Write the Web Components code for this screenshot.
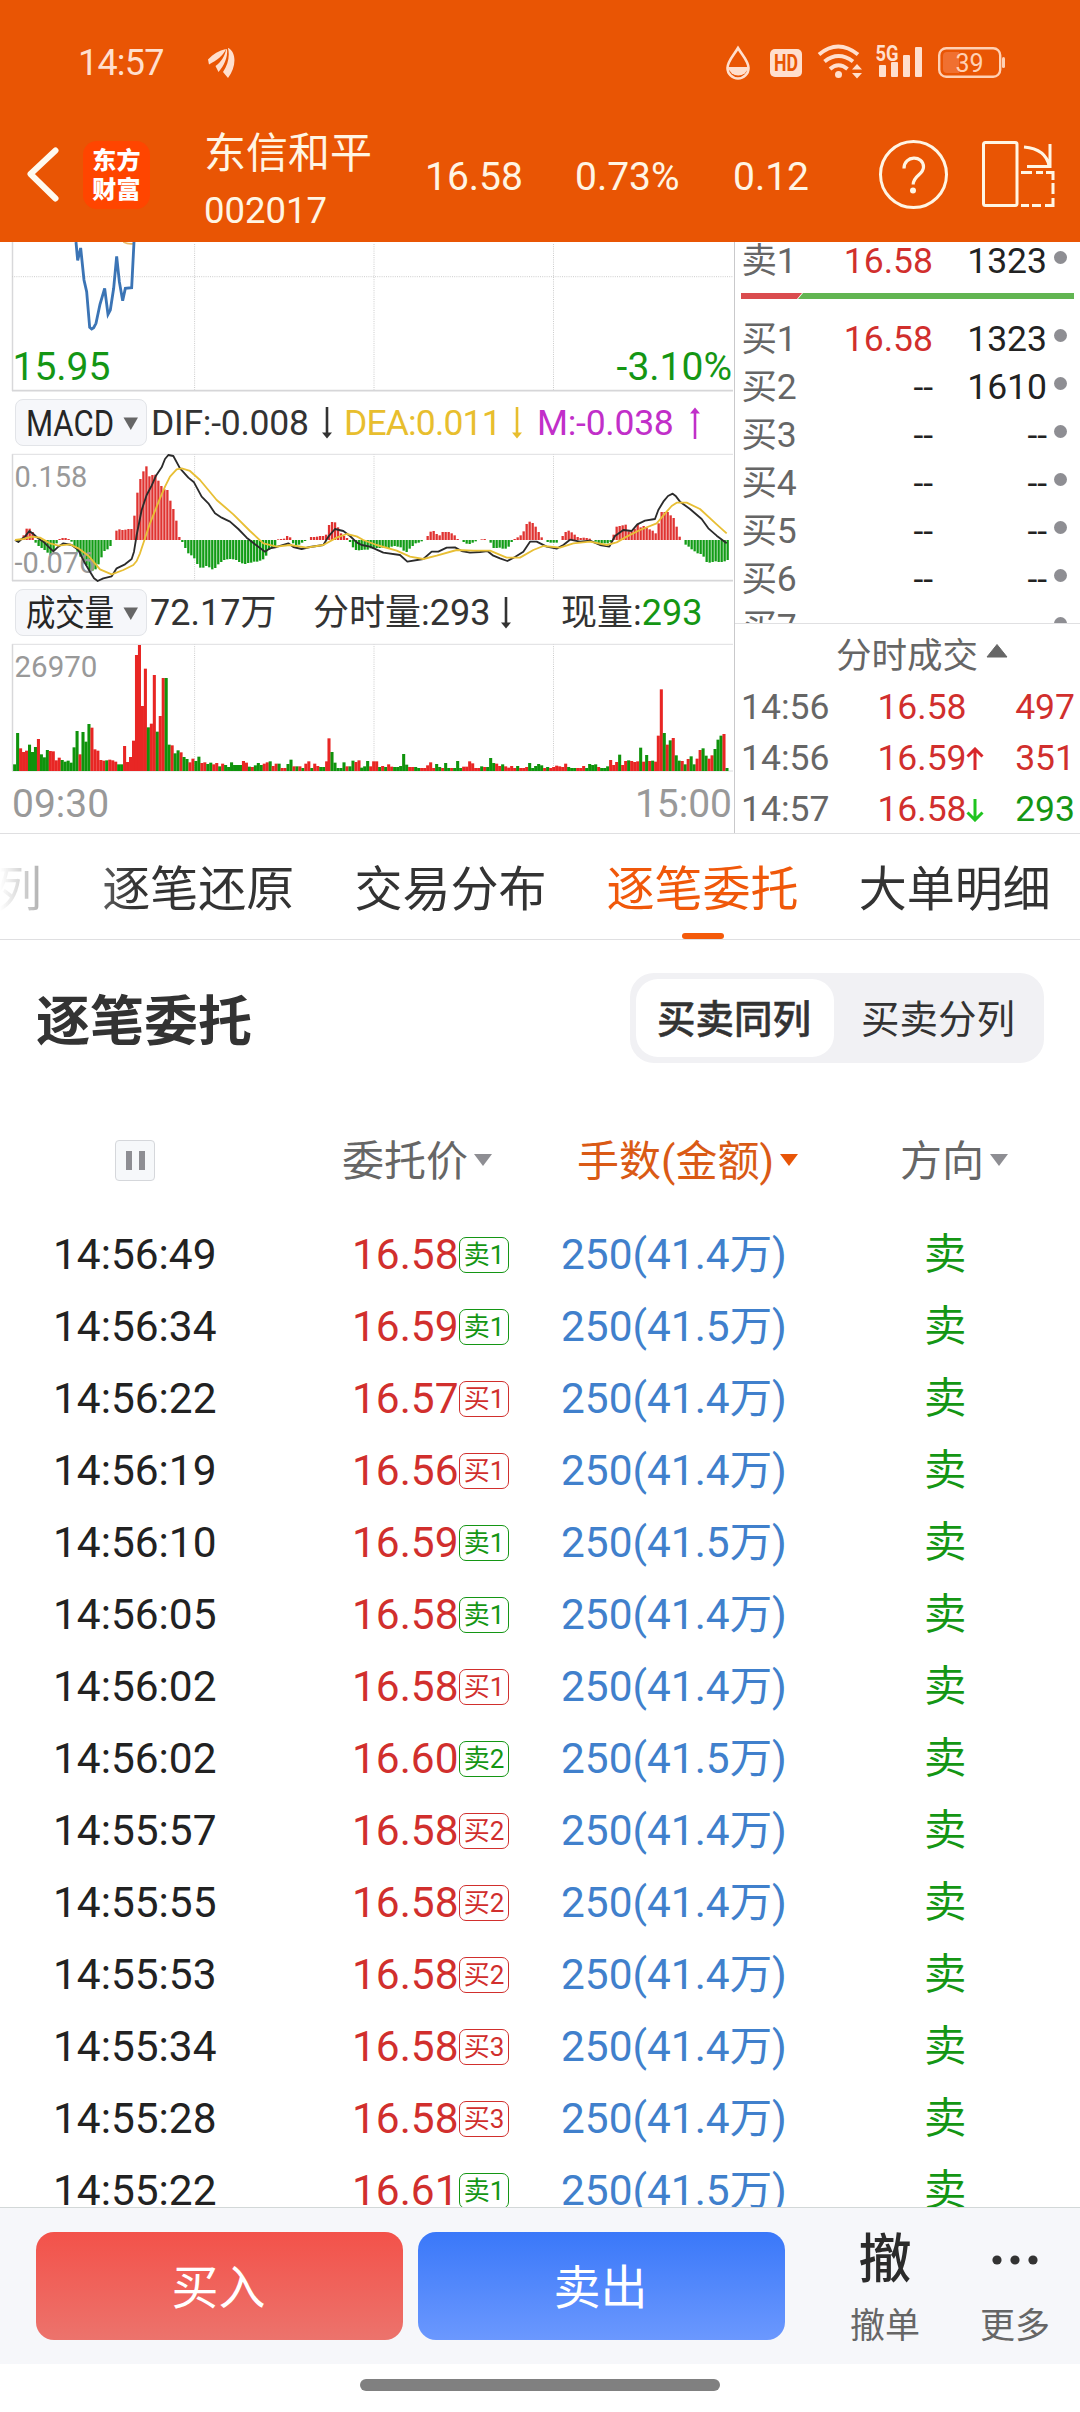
<!DOCTYPE html>
<html lang="zh-CN">
<head>
<meta charset="utf-8">
<title>东信和平 002017</title>
<style>
html,body{margin:0;padding:0;background:#fff}
body{width:1080px;height:2412px;overflow:hidden;font-family:Roboto,"Noto Sans CJK SC",sans-serif;color:#333}
</style>
</head>
<body>
<stock-app></stock-app>
<script>
const define = (name, css, html) => customElements.define(name, class extends HTMLElement {
  constructor() {
    super();
    const root = this.attachShadow({ mode: 'open' });
    root.innerHTML = `<style>*{box-sizing:border-box}:host{display:block;box-sizing:border-box;white-space:nowrap}svg{display:block;flex:none}${css}</style>` +
      (typeof html === 'function' ? html(this) : html);
  }
});

/* ---------- status bar ---------- */
define('status-bar', `
:host{height:106px;display:flex;align-items:center;padding:18px 74px 0 78px;color:#ffdfce;font-size:36px;line-height:44px}
.time{letter-spacing:-.8px;width:130px;padding-top:2px}
.sp{flex:1}
.icons{display:flex}`,
`<span class="time">14:57</span>
<svg width="28" height="30" viewBox="0 0 28 30" style="margin-top:2px"><g fill="#ffdfce"><path d="M0 11.500C5 6 11 2.500 18 1 15 8 9 12 1 16.500Z"/><path d="M19 1C20 9 16 18 10.500 24L7.500 18C13 14 17 8 18 1.500Z"/><path d="M20.500 0C29 5 28 20 20 30L15 24C20 17 22 8 20 0Z"/></g></svg>
<span class="sp"></span>
<svg width="280" height="36" viewBox="727 44 280 36" style="margin-top:0">
<path d="M739 48C735 55 728.500 61 728.500 68A10.500 10.500 0 0 0 749.500 68C749.500 61 743 55 739 48Z" fill="none" stroke="#ffdfce" stroke-width="2.600"/>
<path d="M729 67H749.500A10.500 11 0 0 1 729 67Z" fill="#ffdfce"/>
<rect x="771" y="49" width="32" height="28" rx="5" fill="#ffdfce"/>
<text x="787" y="71" font-size="23" font-weight="700" text-anchor="middle" textLength="24" lengthAdjust="spacingAndGlyphs" fill="#e85503" font-family="Roboto">HD</text>
<g fill="none" stroke="#ffdfce" stroke-width="4"><path d="M820 54.500Q839 38.500 859 54.500"/><path d="M825.500 61.500Q839.500 50.500 854 61.500"/><path d="M831 69Q839.500 61.500 848.500 69"/></g>
<circle cx="839.500" cy="74.500" r="3.500" fill="#ffdfce"/>
<path d="M853 69.500L858 64L863 69.500ZM853 73L858 78.500L863 73Z" fill="#ffdfce"/>
<text x="876.500" y="60.500" font-size="22" font-weight="700" textLength="23" lengthAdjust="spacingAndGlyphs" fill="#ffdfce" font-family="Roboto">5G</text>
<g fill="#ffdfce"><rect x="880" y="65" width="7" height="12" rx="1"/><rect x="892" y="62" width="7" height="15" rx="1"/><rect x="904" y="55" width="7" height="22" rx="1"/><rect x="916" y="47" width="7" height="30" rx="1"/></g>
<rect x="940.200" y="48.200" width="61" height="28.600" rx="7" fill="none" stroke="#ffd0b4" stroke-width="2.400"/>
<path d="M948 52H960V73H948Q944 73 944 69V56Q944 52 948 52Z" fill="#f07030"/>
<rect x="1003" y="57" width="3" height="11" rx="1.500" fill="#ffd0b4"/>
<text x="970.500" y="71.500" font-size="25" text-anchor="middle" fill="#ffd0b4" font-family="Roboto">39</text>
</svg>`);

/* ---------- title bar ---------- */
define('app-logo', `
:host{width:67px;height:68px;border-radius:14px;background:#ff4500;color:#fff;display:flex;flex-direction:column;align-items:center;justify-content:center;
font:900 24px/29px "Noto Sans CJK SC",sans-serif;letter-spacing:.2px;padding-bottom:4px}`,
`<span>东方</span><span>财富</span>`);

define('title-bar', `
:host{height:136px;display:flex;align-items:flex-start;color:#fff5e4;padding-left:26px}
app-logo{margin:35px 0 0 23px}
.name{margin:24px 0 0 54px;width:221px}
.name b{display:block;font-weight:400;font-size:42px;line-height:48px}
.name i{display:block;font-style:normal;font-size:36.500px;line-height:40px;margin-top:13px}
.q{font-size:39px;line-height:48px;margin-top:47px}
.a{width:150px}.b{width:158px}.c{width:145px}`,
`<svg width="34" height="56" viewBox="26 146 34 56" style="margin-top:40px"><path d="M55.500 150.500L30.500 174L55.500 198.500" fill="none" stroke="#fffaf0" stroke-width="6" stroke-linecap="round" stroke-linejoin="round"/></svg>
<app-logo></app-logo>
<div class="name"><b>东信和平</b><i>002017</i></div>
<span class="q a">16.58</span><span class="q b">0.73%</span><span class="q c">0.12</span>
<svg width="180" height="72" viewBox="878 138 180 72" style="margin-top:32px">
<circle cx="913.500" cy="174.500" r="33" fill="none" stroke="#fff5e4" stroke-width="3"/>
<path d="M904 168.500C904 155 923.500 155 923.500 167C923.500 175 913.200 175 913.200 184.500" fill="none" stroke="#fff5e4" stroke-width="3.200"/><circle cx="913" cy="190.500" r="3" fill="#fff5e4"/>
<g fill="none" stroke="#fff5e4" stroke-width="3"><rect x="983.500" y="142.500" width="33.500" height="63" rx="2"/>
<path d="M1021 172.500H1032M1036 172.500H1043M1046 172.500H1053V180M1053 183V194M1053 198V205.500H1045M1041 205.500H1032M1029 205.500H1021"/>
<path d="M1024 147Q1046 149 1049 166M1050 144V166.500H1027"/></g></svg>`);

/* ---------- charts (drawn in thirds of a pixel) ---------- */
const RED = '#d12f2d', GREEN = '#149614';
const curve = p => 'M' + p.trim().split(/\s+/).join('L');
const grid = (y1, y2) => [194.6, 374, 553.5].map(x => `<path d="M${x} ${y1}V${y2}" stroke="#ccc" stroke-width="1" stroke-dasharray="1 1.200"/>`).join('');

define('price-chart', `:host{height:157px}text{font-family:Roboto;font-size:39px;fill:${GREEN}}`,
`<svg width="734" height="157" viewBox="0 242 734 157">
<path d="M12.500 242V391" stroke="#d8d8da" stroke-width="1.500"/>${grid(244, 390)}
<path d="M12 276.700H733" stroke="#ccc" stroke-dasharray="1 1.200"/><path d="M12 390.700H733" stroke="#d6d6d8" stroke-width="1.800"/>
<g transform="translate(0 235) scale(.33333)" fill="none">
<path d="M370 21Q385 29 402 26" stroke="#e8b968" stroke-width="5"/>
<path d="${curve('228,21 233,76 242,39 252,135 260,170 269,277 275,282 281,278 288,265 300,208 314,160 324,238 331,225 341,160 350,64 358,140 368,197 376,160 395,158 402,21')}" stroke="#3b74b5" stroke-width="8.500"/></g>
<text x="12.500" y="380.300">15.95</text><text x="732" y="380.300" text-anchor="end">-3.10%</text></svg>`);

const macd = [
  [53, '-5 2 14 34 34 24 -8 -18 -24 -30 -38 -46 -33 -10 3 6 6 3 -5 -18 -35 -50 -64 -76 -90 -92 -88 -73 -52 -33 -28 -18 0 28 32 30 31 33 33 73 142 183 206 221 191 195 196 178 162 152 150 118 93 58 9 -6 -24 -40 -46 -55 -72 -83 -83 -78 -82 -88 -84 -73 -66 -60 -58 -57 -58 -60 -66 -70 -72 -69 -68 -65 -65 -62 -58 -47 -30 -24 -18 2 3 4 12 8 -10 -16 -14 -8 -3 0 9 9 10 12 12 16 45 54 53 38 20 12 6 -6 -22 -30 -31'],
  [1085, '-30 -29 -29 -25 -27 -24 -24 -23 -23 -24 -20 -18 -20 -22 -32 -36 -26 -18 -10 -8 -4 0 12 25 27 18 14 24 24 24 20 14 3 0 -6 -11 -12 -8 -4 0 2 3 0 -8 -24 -24 -23 -26 -26 -20 -6 3 8 14 26 48 55 51 40 24 8 0 -6 -8 -8 -8 0 12 24 28 23 16 9 6 7 6 4 0 -5 -9 -10 -10 -10 -6 16 40 42 44 46 26 26 34 46 38 42 36 32 28 20 50 84 84 84 74 66 40 10 0 -14 -20 -28 -34 -40 -42 -50 -66 -68 -66 -64 -66 -66 -64 -60']
];
const macdBars = macd.map(([x0, s]) => s.split(' ').map((v, i, all) => {
  const x = x0 + i * ((x0 === 53 ? 1077 : 2183) - x0) / (all.length - 1);
  return +v ? `<path d="M${x} 915V${915 - v}" stroke="${v > 0 ? '#e03331' : '#129c16'}"/>` : '';
}).join('')).join('');

define('macd-chart', `:host{height:134px}text{font-family:Roboto;font-size:29px;fill:#999}`,
`<svg width="734" height="134" viewBox="0 451 734 134">
<path d="M12.500 454V581" stroke="#d8d8da" stroke-width="1.500"/>${grid(454, 580)}
<path d="M12 454.300H733" stroke="#dedee0"/><path d="M12 580.700H733" stroke="#d6d6d8" stroke-width="1.800"/>
<g transform="translate(0 235) scale(.33333)" fill="none" stroke-linejoin="round"><g stroke-width="7">${macdBars}</g></g>
<text x="14.500" y="486.800">0.158</text><text x="14.500" y="573">-0.076</text>
<g transform="translate(0 235) scale(.33333)" fill="none" stroke-linejoin="round">
<path stroke="#2b2b2b" stroke-width="5.500" d="${curve('45,915 55,921 65,912 75,905 88,888 100,897 112,908 130,920 145,935 160,949 175,935 190,925 215,930 235,945 255,985 270,1010 282,1030 293,1038 310,1030 335,1024 350,1000 375,988 395,972 402,950 410,900 425,825 440,780 455,752 468,722 485,697 495,672 505,660 520,663 540,700 565,728 582,742 605,785 625,805 645,835 665,848 690,860 715,882 740,908 765,928 795,950 810,940 830,936 865,925 880,936 905,942 930,936 970,930 985,905 1005,882 1030,888 1050,903 1070,922 1085,930 1110,935 1150,953 1200,960 1222,980 1270,972 1295,950 1315,950 1340,938 1365,937 1385,948 1410,953 1440,951 1462,948 1480,962 1500,970 1522,978 1545,966 1570,950 1590,920 1610,920 1640,935 1670,941 1690,930 1710,914 1740,920 1770,917 1800,930 1828,935 1845,903 1870,885 1895,888 1912,868 1935,857 1965,852 1975,825 1990,800 2004,783 2018,776 2028,784 2040,800 2070,822 2105,852 2125,880 2150,902 2180,925')}"/>
<path stroke="#e8bf35" stroke-width="5.500" d="${curve('45,915 70,912 95,905 120,908 150,925 175,932 210,928 235,940 265,962 300,1003 335,1018 370,1005 400,990 410,978 420,955 450,865 480,790 495,755 510,725 530,703 545,700 570,708 600,735 650,795 700,838 750,888 790,925 830,935 870,930 920,938 970,930 1010,908 1040,897 1070,904 1090,915 1130,930 1190,947 1230,965 1270,972 1310,962 1370,945 1420,947 1470,947 1520,968 1560,968 1600,945 1630,933 1680,938 1720,925 1770,920 1820,930 1850,922 1880,905 1920,885 1970,865 2000,830 2015,813 2030,803 2060,803 2100,822 2150,868 2180,895')}"/></g></svg>`);

const volume = [
  [44, 980, 'g20 g114 r68 r57 r61 g79 g57 g72 r96 g50 g41 g63 r60 r59 r32 r40 g33 g28 g31 g25 g71 g120 r50 g117 g88 g141 r130 r65 r61 r33 r31 g32 r34 r32 r28 g20 g20 r75 r27 r42 r91 r348 r378 r195 r307 g131 r142 r288 g118 r165 r279 g279 g79 r77 g53 g62 r56 g42 g36 r26 r37 g30 g43 r24 r26 g21 g25 r20 r24 g14 r22 g18 g12 g26 g18 g18 g18 r30 r25 g13 r12 g17 g24 g18 r22 r26 g29 r15 r22 g22 r9 r9 g21 g34 r14 g14 r14 g9 r22 r29 g9 r22 r15 g12 g12 r29'],
  [987, 1077, 'r98 g57 g25 g9 g9 g26 r14 g14 g31 r27 r32'],
  [1085, 1967, 'g10 g14 g30 r14 r29 r29 g12 r15 g12 r20 r13 g12 g12 g15 g51 g19 r12 r12 g12 g9 r9 r9 r17 r26 r9 g21 g12 r9 g24 g9 r9 g9 g30 g9 r13 r13 r29 r23 r9 r9 g14 r12 g12 g39 g24 r22 r15 g20 r14 r10 r15 r9 g15 r9 r9 r12 g24 g9 g15 g21 g17 r9 g12 r9 r12 r16 r14 r12 r22 g12 g9 g9 r9 r9 r15 g9 g21 g18 g20 r12 g9 g9 g14 r33 r18 r27 g49 r18 r30 g32 r30 r27 r29 g70 r28 g48 r30 g31 r28'],
  [1975, 2181, 'r106 r245 g114 r79 g92 r99 g47 g31 r30 g20 r36 g44 g20 r37 r63 g68 g46 r37 r47 g66 g94 g106 r111 g9']
];
const volBars = volume.map(([a, b, s]) => s.split(' ').map((t, i, all) => {
  const x = a + i * (b - a) / (all.length - 1), h = +t.slice(1);
  return `<rect x="${(x - 4.6).toFixed(1)}" y="${573 - h}" width="9.200" height="${h}" fill="${t[0] === 'r' ? '#e82624' : '#0f930c'}"/>`;
}).join('')).join('');

define('volume-chart', `:host{height:192px}text{font-family:Roboto;fill:#999;font-size:39px}`,
`<svg width="734" height="192" viewBox="0 641 734 192">
<path d="M12.500 644V771" stroke="#d8d8da" stroke-width="1.500"/>${grid(644, 770)}
<path d="M12 644.300H733M12 771H733" stroke="#dedee0"/>
<g transform="translate(0 580) scale(.33333)">${volBars}</g>
<text x="14.500" y="677" style="font-size:29.500px">26970</text>
<text x="12" y="817.300">09:30</text><text x="732" y="817.300" text-anchor="end">15:00</text></svg>`);

define('index-chip', `
:host{width:132px;height:47px;border:1.500px solid #e2e4e8;border-radius:8px;background:#f6f7fa;display:flex;align-items:center;color:#262626;padding-left:10px}
text{font-size:36px;font-family:Roboto,"Noto Sans CJK SC",sans-serif;fill:#262626}`,
el => `<svg width="118" height="44" viewBox="0 0 118 44"><text x="0" y="34.500" textLength="88" lengthAdjust="spacingAndGlyphs">${el.getAttribute('label')}</text><path d="M97.500 16.500H112L104.800 29Z" fill="#666"/></svg>`);

define('thin-arrow', `:host{width:10px;height:32px;flex:none}:host([up]){transform:scaleY(-1)}`,
`<svg width="10" height="32" viewBox="0 0 10 32"><path d="M5 0V27" stroke="currentColor" stroke-width="2.600"/><path d="M0 25.500L5 31.500L10 25.500Z" fill="currentColor"/></svg>`);

define('index-row', `
:host{display:flex;align-items:center;padding-left:15px;font-size:35.500px;line-height:47px;color:#333}`,
`<slot></slot>`);

define('chart-column', `
:host{width:734px;display:flex;flex-direction:column;flex:none}
index-row{flex:none}
.m1{height:52px;padding-bottom:5px}
.m2{height:56px;padding-bottom:1px}
.t{letter-spacing:-.25px;font-size:35.500px;padding-top:1px}
.m2 .t{font-size:36px;letter-spacing:0}
.y{color:#e8be2e}.p{color:#c12fc9}.g{color:${GREEN}}`,
`<price-chart></price-chart>
<index-row class="m1"><index-chip label="MACD"></index-chip>
<span class="t" style="width:171px;margin-left:4px">DIF:-0.008</span><thin-arrow></thin-arrow>
<span class="t y" style="width:158px;margin-left:12px;letter-spacing:-.85px">DEA:0.011</span><thin-arrow class="y" style="margin-left:10px"></thin-arrow>
<span class="t p" style="width:148px;margin-left:15px">M:-0.038</span><thin-arrow up class="p" style="margin-left:5px"></thin-arrow></index-row>
<macd-chart></macd-chart>
<index-row class="m2"><index-chip label="成交量"></index-chip>
<span class="t" style="width:163px;margin-left:3px">72.17万</span>
<span class="t" style="width:188px">分时量:293</span><thin-arrow></thin-arrow>
<span class="t" style="margin-left:50px">现量:</span><span class="t g">293</span></index-row>
<volume-chart></volume-chart>`);

/* ---------- order book ---------- */
define('book-row', `
:host{display:flex;align-items:center;height:48px;font-size:35.500px;line-height:48px;color:#222;flex:none;padding-left:6.500px}
.l{width:60px;color:#666;letter-spacing:-.3px}.p{width:131.500px;text-align:right}.v{width:114px;text-align:right}
.l,.p,.v{padding-top:1px}
.p[r]{color:${RED}}.d{width:13px;height:13px;border-radius:50%;background:#8e8e93;margin:-6px 0 0 7px}`,
el => { const [l, p, v] = el.dataset.v.split('|'); return `<span class="l">${l}</span><span class="p" ${p === '--' ? '' : 'r'}>${p}</span><span class="v">${v}</span><span class="d"></span>`; });

define('deal-row', `
:host{display:flex;align-items:center;height:51px;flex:none;font-size:35.500px;line-height:51px;color:#666;padding-left:6px}
.p{color:${RED};margin-left:46px;width:91px;padding-left:2px}.a{width:18px;margin-left:0}
.v{margin-left:auto;padding-right:5px;color:${RED}}.v[g]{color:${GREEN}}`,
el => {
  const [t, p, a, v] = el.dataset.v.split('|');
  const arrow = a === 'u' ? `<svg width="18" height="24" viewBox="0 0 18 24"><path d="M9 23V2M1.500 9.500L9 2L16.500 9.500" fill="none" stroke="#d8262a" stroke-width="3"/></svg>`
    : a === 'd' ? `<svg width="18" height="24" viewBox="0 0 18 24"><path d="M9 1V22M1.500 14.500L9 22L16.500 14.500" fill="none" stroke="#1fc41f" stroke-width="3"/></svg>` : '';
  return `<span>${t}</span><span class="p">${p}</span><span class="a">${arrow}</span><span class="v" ${a === 'd' ? 'g' : ''}>${v}</span>`;
});

define('order-book', `
:host{flex:1;border-left:1px solid #c9c9cb;height:591px;display:flex;flex-direction:column;overflow:hidden}
.book{height:381px;flex:none;overflow:hidden;display:flex;flex-direction:column}
.book>:first-child{margin-top:-6px}
.ratio{height:30px;padding:9px 0 0 6px;flex:none}
.head{height:59px;flex:none;border-top:1px solid #e0e0e2;display:flex;align-items:flex-start;justify-content:center;gap:8px;font-size:35.500px;color:#666;padding:1px 0 0 3px;line-height:62px}
.head svg{margin-top:19px}`,
`<div class="book"><book-row data-v="卖1|16.58|1323"></book-row>
<div class="ratio"><svg width="333" height="6" viewBox="0 0 333 6"><path d="M0 0H61L56 6H0Z" fill="#da4c4e"/><path d="M62 0H333V6H57Z" fill="#62b552"/></svg></div>
${['买1|16.58|1323', '买2|--|1610', '买3|--|--', '买4|--|--', '买5|--|--', '买6|--|--', '买7|--|--'].map(v => `<book-row data-v="${v}"></book-row>`).join('')}</div>
<div class="head"><span style="margin-left:26px">分时成交</span><svg width="22" height="14" viewBox="0 0 22 14"><path d="M11 .5L21 13H1Z" fill="#666" stroke="#666" stroke-linejoin="round"/></svg></div>
<deal-row data-v="14:56|16.58||497"></deal-row><deal-row data-v="14:56|16.59|u|351"></deal-row><deal-row data-v="14:57|16.58|d|293"></deal-row>`);

/* ---------- tabs ---------- */
define('tab-strip', `
:host{height:107px;border-top:1px solid #dfdfe1;border-bottom:1px solid #dfdfe1;overflow:hidden}
.r{display:flex;gap:60.200px;margin-left:-6px;font-size:48px;line-height:112px;color:#333;height:105px}
.w{-webkit-mask-image:linear-gradient(90deg,transparent 0,rgba(0,0,0,.4) 42px,#000 135px)}
.on{color:#f0580a;display:flex;flex-direction:column;align-items:center}
.on u{display:block;width:42px;height:6px;border-radius:3px;background:#f45a0a;margin-top:-13px}`,
`<div class="w"><div class="r"><span>列</span><span>逐笔还原</span><span>交易分布</span><span class="on">逐笔委托<u></u></span><span>大单明细</span></div></div>`);

define('seg-control', `
:host{display:flex;width:414px;height:90px;border-radius:24px;background:#f1f1f4;padding:6px;font-size:38.500px;line-height:82px;color:#333}
b{width:198px;height:78px;border-radius:22px;background:#fff;text-align:center;font-weight:500;-webkit-text-stroke:.5px #333;padding-right:2px}
span{flex:1;text-align:center;padding-left:4px}`,
`<b>买卖同列</b><span>买卖分列</span>`);

define('section-head', `
:host{height:156px;display:flex;justify-content:space-between;align-items:flex-start;padding:33px 36px 0 36px}
h2{margin:0;font-size:54px;font-weight:700;line-height:100px;color:#333}`,
`<h2>逐笔委托</h2><seg-control></seg-control>`);

/* ---------- order list ---------- */
define('list-head', `
:host{height:123px;display:flex;align-items:center;font-size:42px;line-height:60px;color:#666;padding:9px 0 0 115px}
.pause{width:40px;height:41px;border:1.500px solid #d5d7db;border-radius:4px;background:#f6f8fa;display:flex;justify-content:center;align-items:center;gap:7px;margin-top:-4px}
.pause i{width:6px;height:19px;background:#8e8e93}
span{display:flex;align-items:center;gap:6px}
.o{color:#da5a15}`,
(() => { const tri = c => `<svg width="18" height="12" viewBox="0 0 18 12" style="margin-top:-4px"><path d="M0 0H18L9 12Z" fill="${c}"/></svg>`;
return `<div class="pause"><i></i><i></i></div><span style="margin-left:187px;width:235px">委托价${tri('#8e8e93')}</span><span class="o" style="width:323px">手数(金额)${tri('#e85507')}</span><span>方向${tri('#8e8e93')}</span>`; })());

define('level-badge', `
:host{display:flex;align-items:center;justify-content:center;width:50px;height:36px;border:1.500px solid currentColor;border-radius:7px;font-size:26px;line-height:34px;color:${RED}}
:host([sell]){color:${GREEN}}`, `<slot></slot>`);

define('order-row', `
:host{display:flex;align-items:center;height:72px;font-size:42.400px;line-height:74px;color:#222;padding-left:53px}
.t{width:299px}.p{color:${RED};width:107px}.n{color:#4080cc;width:363px;margin-left:52px}.d{color:${GREEN}}`,
el => { const [t, p, b, n] = el.dataset.v.split('|');
return `<span class="t">${t}</span><span class="p">${p}</span><level-badge ${b[0] === '卖' ? 'sell' : ''}>${b}</level-badge><span class="n">250(${n}万)</span><span class="d">卖</span>`; });

define('order-list', `:host{height:988px;overflow:hidden}`,
['14:56:49|16.58|卖1|41.4', '14:56:34|16.59|卖1|41.5', '14:56:22|16.57|买1|41.4', '14:56:19|16.56|买1|41.4', '14:56:10|16.59|卖1|41.5', '14:56:05|16.58|卖1|41.4', '14:56:02|16.58|买1|41.4', '14:56:02|16.60|卖2|41.5', '14:55:57|16.58|买2|41.4', '14:55:55|16.58|买2|41.4', '14:55:53|16.58|买2|41.4', '14:55:34|16.58|买3|41.4', '14:55:28|16.58|买3|41.4', '14:55:22|16.61|卖1|41.5'].map(v => `<order-row data-v="${v}"></order-row>`).join(''));

/* ---------- trade bar ---------- */
define('trade-button', `
:host{width:367px;height:108px;border-radius:18px;color:#fff;font-size:47px;line-height:112px;text-align:center;padding-right:2px;background:linear-gradient(#f3524a,#ec736c)}
:host([sell]){background:linear-gradient(#3a78f9,#6b98fe)}`, `<slot></slot>`);

define('trade-bar', `
:host{height:157px;background:#f6f7fa;border-top:1px solid #d3d8d8;display:flex;padding:24px 0 0 36px}
trade-button{margin-right:15px}
.i{display:flex;flex-direction:column;align-items:center;width:70px;font-size:35px;color:#666;line-height:44px}
.i b{height:56px;font-size:53px;line-height:55px;font-weight:500;color:#2b2b2b;display:flex;align-items:center;margin-bottom:17px}`,
`<trade-button>买入</trade-button><trade-button sell>卖出</trade-button>
<div class="i" style="margin-left:50px"><b>撤</b>撤单</div>
<div class="i" style="margin-left:60px"><b><svg width="46" height="10" viewBox="0 0 46 10"><g fill="#333"><circle cx="5" cy="5" r="4.600"/><circle cx="23" cy="5" r="4.600"/><circle cx="41" cy="5" r="4.600"/></g></svg></b>更多</div>`);

define('home-bar', `:host{height:48px;background:#fff;display:flex;justify-content:center;padding-top:15px}i{width:360px;height:12px;border-radius:6px;background:#808080}`, `<i></i>`);

define('stock-app', `
:host{width:1080px;height:2412px;overflow:hidden;background:#fff}
header{background:#e95504;height:242px}
.market{display:flex;height:591px}`,
`<header><status-bar></status-bar><title-bar></title-bar></header>
<div class="market"><chart-column></chart-column><order-book></order-book></div>
<tab-strip></tab-strip><section-head></section-head><list-head></list-head>
<order-list></order-list><trade-bar></trade-bar><home-bar></home-bar>`);
</script>
</body>
</html>
